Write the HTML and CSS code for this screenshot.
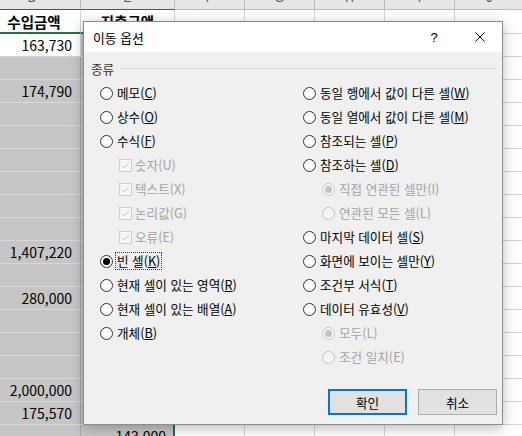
FILE: index.html
```html
<!DOCTYPE html>
<html lang="ko">
<head>
<meta charset="utf-8">
<title>이동 옵션</title>
<link rel="stylesheet" href="styles.css">
</head>
<body>
<div class="sheet">
  <div class="row hdr">
    <div class="c ca sel"><span>D</span></div>
    <div class="c cb sel"><span>E</span></div>
    <div class="c cx"><span>F</span></div>
    <div class="c cx"><span>G</span></div>
    <div class="c cx"><span>H</span></div>
    <div class="c cx"><span>I</span></div>
    <div class="c cx"><span>J</span></div>
  </div>
  <div class="row trow">
    <div class="c ca th">수입금액</div>
    <div class="c cb th">지출금액</div>
    <div class="c cx"></div><div class="c cx"></div><div class="c cx"></div><div class="c cx"></div><div class="c cx"></div>
  </div>
  <div class="row"><div class="c ca num">163,730</div><div class="c cb g"></div><div class="c cx"></div><div class="c cx"></div><div class="c cx"></div><div class="c cx"></div><div class="c cx"></div></div>
  <div class="row"><div class="c ca g"></div><div class="c cb g"></div><div class="c cx"></div><div class="c cx"></div><div class="c cx"></div><div class="c cx"></div><div class="c cx"></div></div>
  <div class="row"><div class="c ca g num">174,790</div><div class="c cb g"></div><div class="c cx"></div><div class="c cx"></div><div class="c cx"></div><div class="c cx"></div><div class="c cx"></div></div>
  <div class="row"><div class="c ca g"></div><div class="c cb g"></div><div class="c cx"></div><div class="c cx"></div><div class="c cx"></div><div class="c cx"></div><div class="c cx"></div></div>
  <div class="row"><div class="c ca g"></div><div class="c cb g"></div><div class="c cx"></div><div class="c cx"></div><div class="c cx"></div><div class="c cx"></div><div class="c cx"></div></div>
  <div class="row"><div class="c ca g"></div><div class="c cb g"></div><div class="c cx"></div><div class="c cx"></div><div class="c cx"></div><div class="c cx"></div><div class="c cx"></div></div>
  <div class="row"><div class="c ca g"></div><div class="c cb g"></div><div class="c cx"></div><div class="c cx"></div><div class="c cx"></div><div class="c cx"></div><div class="c cx"></div></div>
  <div class="row"><div class="c ca g"></div><div class="c cb g"></div><div class="c cx"></div><div class="c cx"></div><div class="c cx"></div><div class="c cx"></div><div class="c cx"></div></div>
  <div class="row"><div class="c ca g"></div><div class="c cb g"></div><div class="c cx"></div><div class="c cx"></div><div class="c cx"></div><div class="c cx"></div><div class="c cx"></div></div>
  <div class="row"><div class="c ca g num">1,407,220</div><div class="c cb g"></div><div class="c cx"></div><div class="c cx"></div><div class="c cx"></div><div class="c cx"></div><div class="c cx"></div></div>
  <div class="row"><div class="c ca g"></div><div class="c cb g"></div><div class="c cx"></div><div class="c cx"></div><div class="c cx"></div><div class="c cx"></div><div class="c cx"></div></div>
  <div class="row"><div class="c ca g num">280,000</div><div class="c cb g"></div><div class="c cx"></div><div class="c cx"></div><div class="c cx"></div><div class="c cx"></div><div class="c cx"></div></div>
  <div class="row"><div class="c ca g"></div><div class="c cb g"></div><div class="c cx"></div><div class="c cx"></div><div class="c cx"></div><div class="c cx"></div><div class="c cx"></div></div>
  <div class="row"><div class="c ca g"></div><div class="c cb g"></div><div class="c cx"></div><div class="c cx"></div><div class="c cx"></div><div class="c cx"></div><div class="c cx"></div></div>
  <div class="row"><div class="c ca g"></div><div class="c cb g"></div><div class="c cx"></div><div class="c cx"></div><div class="c cx"></div><div class="c cx"></div><div class="c cx"></div></div>
  <div class="row"><div class="c ca g num">2,000,000</div><div class="c cb g"></div><div class="c cx"></div><div class="c cx"></div><div class="c cx"></div><div class="c cx"></div><div class="c cx"></div></div>
  <div class="row"><div class="c ca g num">175,570</div><div class="c cb g"></div><div class="c cx"></div><div class="c cx"></div><div class="c cx"></div><div class="c cx"></div><div class="c cx"></div></div>
  <div class="row"><div class="c ca g"></div><div class="c cb g num">143,000</div><div class="c cx"></div><div class="c cx"></div><div class="c cx"></div><div class="c cx"></div><div class="c cx"></div></div>
</div>

<div class="dialog">
  <div class="titlebar">
    <span class="title">이동 옵션</span>
    <div class="tbtn help">?</div>
    <div class="tbtn close"><svg width="10" height="10" viewBox="0 0 10 10"><path d="M0.5 0.5L9.5 9.5M9.5 0.5L0.5 9.5" stroke="#000" stroke-width="1" fill="none"/></svg></div>
  </div>
  <div class="body">
    <div class="ghead"><span>종류</span><i class="rule"></i></div>
    <div class="cols">
      <div class="col l">
        <div class="opt"><span class="radio"></span><span class="lbl">메모(<u>C</u>)</span></div>
        <div class="opt"><span class="radio"></span><span class="lbl">상수(<u>O</u>)</span></div>
        <div class="opt"><span class="radio"></span><span class="lbl">수식(<u>F</u>)</span></div>
        <div class="opt sub dis ck"><span class="chk"><svg width="11" height="11" viewBox="0 0 11 11"><path d="M2 5.5L4.5 8L9 2.5" stroke="#c2c2c2" stroke-width="1" fill="none"/></svg></span><span class="lbl">숫자(U)</span></div>
        <div class="opt sub dis ck"><span class="chk"><svg width="11" height="11" viewBox="0 0 11 11"><path d="M2 5.5L4.5 8L9 2.5" stroke="#c2c2c2" stroke-width="1" fill="none"/></svg></span><span class="lbl">텍스트(X)</span></div>
        <div class="opt sub dis ck"><span class="chk"><svg width="11" height="11" viewBox="0 0 11 11"><path d="M2 5.5L4.5 8L9 2.5" stroke="#c2c2c2" stroke-width="1" fill="none"/></svg></span><span class="lbl">논리값(G)</span></div>
        <div class="opt sub dis ck"><span class="chk"><svg width="11" height="11" viewBox="0 0 11 11"><path d="M2 5.5L4.5 8L9 2.5" stroke="#c2c2c2" stroke-width="1" fill="none"/></svg></span><span class="lbl">오류(E)</span></div>
        <div class="opt"><span class="radio on"></span><span class="lbl focus">빈 셀(<u>K</u>)</span></div>
        <div class="opt"><span class="radio"></span><span class="lbl">현재 셀이 있는 영역(<u>R</u>)</span></div>
        <div class="opt"><span class="radio"></span><span class="lbl">현재 셀이 있는 배열(<u>A</u>)</span></div>
        <div class="opt"><span class="radio"></span><span class="lbl">개체(<u>B</u>)</span></div>
      </div>
      <div class="col r">
        <div class="opt"><span class="radio"></span><span class="lbl">동일 행에서 값이 다른 셀(<u>W</u>)</span></div>
        <div class="opt"><span class="radio"></span><span class="lbl">동일 열에서 값이 다른 셀(<u>M</u>)</span></div>
        <div class="opt"><span class="radio"></span><span class="lbl">참조되는 셀(<u>P</u>)</span></div>
        <div class="opt"><span class="radio"></span><span class="lbl">참조하는 셀(<u>D</u>)</span></div>
        <div class="opt sub dis"><span class="radio on"></span><span class="lbl">직접 연관된 셀만(I)</span></div>
        <div class="opt sub dis"><span class="radio"></span><span class="lbl">연관된 모든 셀(L)</span></div>
        <div class="opt"><span class="radio"></span><span class="lbl">마지막 데이터 셀(<u>S</u>)</span></div>
        <div class="opt"><span class="radio"></span><span class="lbl">화면에 보이는 셀만(<u>Y</u>)</span></div>
        <div class="opt"><span class="radio"></span><span class="lbl">조건부 서식(<u>T</u>)</span></div>
        <div class="opt"><span class="radio"></span><span class="lbl">데이터 유효성(<u>V</u>)</span></div>
        <div class="opt sub dis"><span class="radio on"></span><span class="lbl">모두(L)</span></div>
        <div class="opt sub dis"><span class="radio"></span><span class="lbl">조건 일치(E)</span></div>
      </div>
    </div>
    <div class="btns">
      <button class="btn def">확인</button>
      <button class="btn">취소</button>
    </div>
  </div>
</div>
</body>
</html>
```

FILE: styles.css
```css
* { box-sizing: border-box; margin: 0; padding: 0; }
html, body { width: 522px; height: 436px; overflow: hidden; }
body {
  margin: 0;
  background: #fff;
  font-family: "Noto Sans CJK KR", "Noto Sans", sans-serif;
  position: relative;
}

/* ---- spreadsheet ---- */
.sheet { width: 522px; height: 436px; overflow: hidden; }
.row { display: flex; height: 23px; }
.c {
  flex: none;
  height: 100%;
  border-right: 1px solid #d4d4d4;
  border-bottom: 1px solid #d4d4d4;
}
.ca { width: 81px; }
.cb { width: 94px; }
.cx { width: 70px; }

.hdr { height: 10px; background: #e6e6e6; }
.hdr .c {
  overflow: hidden;
  text-align: center;
  font: 12px/12px "Liberation Sans", sans-serif;
  color: #555;
  border-right-color: #bcbcbc;
  border-bottom-color: #bcbcbc;
}
.hdr .c span { display: block; margin-top: -8px; }
.hdr .ca { padding-right: 16px; }
.hdr .sel { border-bottom-color: #217346; }
.hdr .cb { color: #217346; }

.trow { height: 24px; }
.trow .ca, .trow .cb { border-bottom: 2px solid #217346; }
.th {
  display: flex;
  align-items: center;
  justify-content: center;
  font-weight: bold;
  font-size: 14.5px;
  color: #000;
  padding-top: 1px;
}
.trow .ca { padding-right: 12px; }

.g { background: #c6c6c6; border-bottom-color: #d8d8d8; }
.ca.g { border-right-color: #a9a9a9; }
.row .cb.g { border-right: 2px solid #217346; }

.num {
  display: flex;
  align-items: flex-end;
  justify-content: flex-end;
  padding: 0 8px 2px 0;
  font-size: 14px;
  line-height: 17px;
  color: #000;
}
.cb.num { padding-right: 7px; }

/* ---- dialog ---- */
.dialog {
  position: absolute;
  left: 83px;
  top: 21px;
  width: 420px;
  height: 404px;
  border: 1px solid #8c8c8c;
  background: #f0f0f0;
  box-shadow: 0 3px 12px rgba(0, 0, 0, 0.28);
  font-family: "Noto Sans CJK KR", "Noto Sans", sans-serif;
  font-size: 12.6px;
  color: #000;
  display: flex;
  flex-direction: column;
}
.titlebar {
  height: 30px;
  background: #fff;
  display: flex;
  align-items: center;
  flex: none;
}
.title { flex: 1; padding-left: 9px; font-size: 12.8px; }
.tbtn {
  width: 46px;
  height: 30px;
  display: flex;
  align-items: center;
  justify-content: center;
  font-family: "Liberation Sans", sans-serif;
  font-size: 13px;
}
.close { width: 45px; }
.close svg { display: block; }

.body { flex: 1; padding: 8px 5px 0 7px; }
.ghead {
  height: 16px;
  display: flex;
  align-items: center;
  gap: 6px;
  color: #333;
}
.rule { flex: 1; height: 1px; background: #dcdcdc; }

.cols { display: grid; grid-template-columns: 212px 1fr; margin-top: 5px; }
.col { display: flex; flex-direction: column; }
.col.l { padding-left: 9px; }
.opt {
  height: 24px;
  display: flex;
  align-items: center;
  gap: 4px;
  white-space: nowrap;
}
.opt.sub { padding-left: 19px; }
.opt.ck { gap: 3px; }
.lbl { line-height: 14px; }
.lbl u { text-underline-offset: 1px; }

.radio {
  flex: none;
  width: 13px;
  height: 13px;
  border-radius: 50%;
  border: 1px solid #333;
  background: #fff;
  display: flex;
  align-items: center;
  justify-content: center;
}
.radio.on::after {
  content: "";
  width: 7px;
  height: 7px;
  border-radius: 50%;
  background: #000;
}
.dis { color: #a3a3a3; }
.dis .radio { border-color: #c2c2c2; background: #f5f5f5; }
.dis .radio.on::after { background: #c2c2c2; }

.chk {
  flex: none;
  width: 13px;
  height: 13px;
  border: 1px solid #cdcdcd;
  background: #f7f7f7;
  display: flex;
}
.chk svg { display: block; }

.focus {
  border: 1px dotted #333;
  padding: 1px 1px;
  margin-left: -2px;
}

.btns {
  display: flex;
  justify-content: flex-end;
  gap: 11px;
  margin-top: 20px;
}
.btn {
  width: 79px;
  height: 26px;
  background: #e1e1e1;
  border: 1px solid #adadad;
  font: inherit;
  color: #000;
  display: flex;
  align-items: center;
  justify-content: center;
}
.btn.def { border: 2px solid #0078d7; }
```
